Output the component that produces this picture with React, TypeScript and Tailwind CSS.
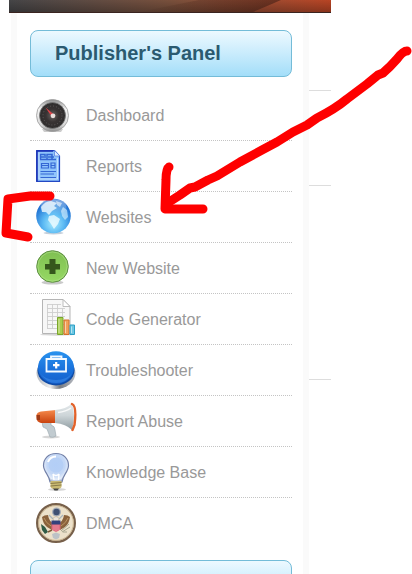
import type { ReactNode } from 'react';

interface MenuItem {
  label: string;
  icon: ReactNode;
}

function DashboardIcon() {
  return (
    <>
      <defs>
        <linearGradient id="dash-rim" x1="0" y1="0" x2="0" y2="1">
          <stop offset="0" stopColor="#8c8c8c" />
          <stop offset="0.3" stopColor="#f4f4f4" />
          <stop offset="0.8" stopColor="#d8d8d8" />
          <stop offset="1" stopColor="#8a8a8a" />
        </linearGradient>
        <radialGradient id="dash-face">
          <stop offset="0" stopColor="#6b6462" />
          <stop offset="0.5" stopColor="#383333" />
          <stop offset="1" stopColor="#2f2d2d" />
        </radialGradient>
      </defs>
      <path d="M6 39 H27 L25 42 H8 Z" fill="#999" opacity="0.5" />
      <circle cx="16.5" cy="25.5" r="16" fill="url(#dash-rim)" stroke="#9a9a9a" strokeWidth="0.8" />
      <circle cx="16.5" cy="25.5" r="13" fill="url(#dash-face)" stroke="#777" strokeWidth="0.8" />
      <circle cx="16.5" cy="25.5" r="9.5" fill="none" stroke="#6a6464" strokeWidth="0.8" strokeDasharray="1 2" />
      <path d="M9.5 17.5 L18 24.5 L16 27 Z" fill="#e0444a" />
      <circle cx="17" cy="25.8" r="2.4" fill="#e9dedb" />
    </>
  );
}

function ReportsIcon() {
  return (
    <>
      <path d="M0.7 9.7 H18.5 L23.5 15 V40.3 H0.7 Z" fill="#8fc4fb" stroke="#2348c4" strokeWidth="1.2" />
      <path d="M18.5 9.5 V15 H24 Z" fill="#dcebff" stroke="#5d86e0" strokeWidth="0.8" />
      <path d="M1 9.5 V40.5 M0.5 10 H17" stroke="#1a2fb4" strokeWidth="1.4" />
      <g fill="none" stroke="#3467d4">
        <path d="M4.5 18.5 V13.5 H9 V17 M11 18 V13.5 H16 V18 M4 18.5 H20 M5 16 H8 M12 16 H18" strokeWidth="1.5" />
        <path d="M5.5 22.5 H12.5 V27 H5.5 Z M15 22 H19 V27 H15 Z M6 24.5 H12 M15 24.5 H19" strokeWidth="1.2" />
        <path d="M4.5 30.5 H20 M4.5 33 H18 M4.5 36.5 H20" strokeWidth="1" />
      </g>
      <path d="M3 11.5 V38 H21.5 V17" fill="none" stroke="#d2e7ff" strokeWidth="0.8" />
    </>
  );
}

function GlobeIcon() {
  return (
    <>
      <defs>
        <radialGradient id="globe-sea" cx="0.5" cy="0.72" r="0.68">
          <stop offset="0" stopColor="#a8ecff" />
          <stop offset="0.45" stopColor="#5bb9f3" />
          <stop offset="1" stopColor="#1261cc" />
        </radialGradient>
        <linearGradient id="globe-shine" x1="0" y1="0" x2="0" y2="1">
          <stop offset="0" stopColor="#fff" stopOpacity="0.5" />
          <stop offset="1" stopColor="#fff" stopOpacity="0" />
        </linearGradient>
      </defs>
      <ellipse cx="17.5" cy="41" rx="10" ry="1.5" fill="#8ba0b5" opacity="0.5" />
      <circle cx="17.5" cy="24" r="17.3" fill="url(#globe-sea)" />
      <path d="M5 15 Q9 9 15 9 L21 11 L18 14 L21 16 L16 19 L13 23 L10 20 L6 20 Z" fill="#eaf7ff" opacity="0.8" />
      <path d="M20 9 L26 11 L24 15 L21 13 Z" fill="#fff" opacity="0.6" />
      <path d="M27 15 L31 18 L32 25 L29 28 L26 24 L25 19 Z" fill="#d4efff" opacity="0.65" />
      <path d="M13 24 L18 23 L24 27 L22 32 L18 37 L15 32 L12 28 Z" fill="#effbff" opacity="0.8" />
      <ellipse cx="17.5" cy="15" rx="13" ry="8" fill="url(#globe-shine)" />
    </>
  );
}

function AddIcon() {
  return (
    <>
      <defs>
        <linearGradient id="add-fill" x1="0" y1="0" x2="0" y2="1">
          <stop offset="0" stopColor="#7fbf51" />
          <stop offset="1" stopColor="#96d964" />
        </linearGradient>
      </defs>
      <ellipse cx="16.5" cy="39.5" rx="11" ry="2" fill="#888" opacity="0.45" />
      <circle cx="16.5" cy="23.5" r="15.8" fill="url(#add-fill)" stroke="#5f8f45" />
      <circle cx="16.5" cy="23.5" r="14.6" fill="none" stroke="#b3e08c" strokeWidth="1" opacity="0.6" />
      <path d="M13.5 16 H19.5 V21 H24 V26.5 H19.5 V31 H13.5 V26.5 H9 V21 H13.5 Z" fill="#35571c" />
    </>
  );
}

function CodeIcon() {
  return (
    <>
      <ellipse cx="21" cy="40.5" rx="17" ry="1.2" fill="#999" opacity="0.4" />
      <path d="M6.5 5.5 H27 L34 12.5 V39.5 H6.5 Z" fill="#f7f7f7" stroke="#b5b5b5" />
      <path d="M27 5.5 V12.5 H34 Z" fill="#fff" stroke="#b5b5b5" strokeWidth="0.9" />
      <g stroke="#cdcdcd" strokeWidth="0.9" fill="none">
        <path d="M11 10.5 H25 M11 14.5 H29 M11 18.5 H29 M11 22.5 H29 M11 26.5 H29 M11 30.5 H29 M11 34.5 H22" />
        <path d="M11.5 10 V35 M16.5 10 V35 M21.5 10 V35 M26.5 14 V30" />
      </g>
      <path d="M21.5 23.5 H27 V40.5 H21.5 Z" fill="#a9ce4f" stroke="#79a62a" />
      <path d="M28 26 H33 V40.5 H28 Z" fill="#f2a25b" stroke="#d4702d" />
      <path d="M34 31 H38.5 V40.5 H34 Z" fill="#6cc8e4" stroke="#2e9ec4" />
      <path d="M23 25 V39 M29.5 27.5 V39 M35.5 32.5 V39" stroke="#fff" opacity="0.5" />
    </>
  );
}

function TroubleshooterIcon() {
  return (
    <>
      <defs>
        <linearGradient id="kit-base" x1="0" y1="0" x2="1" y2="0">
          <stop offset="0" stopColor="#b3b8c0" />
          <stop offset="0.35" stopColor="#eeeeee" />
          <stop offset="0.6" stopColor="#777b82" />
          <stop offset="1" stopColor="#b9bdc5" />
        </linearGradient>
        <linearGradient id="kit-top" x1="0" y1="0" x2="0" y2="1">
          <stop offset="0" stopColor="#2a93ee" />
          <stop offset="0.55" stopColor="#1a72dc" />
          <stop offset="1" stopColor="#1560cc" />
        </linearGradient>
      </defs>
      <ellipse cx="20" cy="28" rx="19.5" ry="16" fill="url(#kit-base)" />
      <ellipse cx="20" cy="25.5" rx="18.5" ry="15" fill="#0f4ca8" />
      <ellipse cx="20" cy="22.5" rx="18" ry="16.3" fill="url(#kit-top)" />
      <path d="M4 28 Q10 38 20 38 Q31 38 36 28 Q31 35 20 35 Q9 35 4 28 Z" fill="#4b9bf2" opacity="0.4" />
      <path d="M10.5 14 H30 V26.5 H10.5 Z" fill="none" stroke="#f4faff" strokeWidth="1.8" />
      <path d="M15 14 V11.5 H25.5 V14" fill="none" stroke="#f4faff" strokeWidth="1.8" />
      <path d="M20.2 17 V23.5 M17 20.2 H23.5" stroke="#fff" strokeWidth="2.2" />
    </>
  );
}

function AbuseIcon() {
  return (
    <>
      <defs>
        <linearGradient id="horn" x1="0" y1="0" x2="0" y2="1">
          <stop offset="0" stopColor="#e4e9eb" />
          <stop offset="0.45" stopColor="#cdd5d8" />
          <stop offset="1" stopColor="#8f9ca1" />
        </linearGradient>
        <linearGradient id="horn-end" x1="0" y1="0" x2="0" y2="1">
          <stop offset="0" stopColor="#f58a4c" />
          <stop offset="1" stopColor="#c9430e" />
        </linearGradient>
      </defs>
      <ellipse cx="15" cy="41" rx="9" ry="1.5" fill="#999" opacity="0.4" />
      <path d="M6 26 H15 L15 29 Q19 30 19 34 L20 40 Q17 42 14 41 L11 33 L7 31 Z" fill="#c1cbd0" stroke="#99a6ac" strokeWidth="0.6" />
      <path d="M0.5 19 Q1 16 5 15.5 L20 14 V27 H5 Q0.5 26 0.5 22 Z" fill="url(#horn-end)" />
      <path d="M0.5 19 H4 V24 H0.8 Z" fill="#9f3b17" />
      <path d="M19 14 Q30 13 36 7.5 Q40 20 36 34 Q30 28 19 27 Z" fill="url(#horn)" />
      <path d="M36 8 Q41 10 38.5 29 L36.5 34" fill="none" stroke="#e2622a" strokeWidth="2.4" strokeLinecap="round" />
      <path d="M22 16.5 Q30 15.5 35 12" fill="none" stroke="#fff" strokeWidth="1.5" opacity="0.8" />
    </>
  );
}

function BulbIcon() {
  return (
    <>
      <defs>
        <radialGradient id="bulb" cx="0.5" cy="0.4" r="0.6">
          <stop offset="0" stopColor="#bcd5f8" />
          <stop offset="0.6" stopColor="#c3d7f6" />
          <stop offset="0.85" stopColor="#e6eefa" />
          <stop offset="1" stopColor="#9aa9c8" />
        </radialGradient>
      </defs>
      <ellipse cx="21" cy="42.5" rx="9" ry="1.5" fill="#999" opacity="0.4" />
      <path d="M20 6.5 C12 6.5 7.5 12 7.5 18.5 C7.5 25 13.5 28 14 35 H26 C26.5 28 32.5 25 32.5 18.5 C32.5 12 28 6.5 20 6.5 Z" fill="url(#bulb)" stroke="#7280a8" strokeWidth="1.2" />
      <circle cx="20" cy="18" r="7.5" fill="#a9c8f5" opacity="0.5" />
      <path d="M12 15 Q14 9.5 20 9.5" fill="none" stroke="#fff" strokeWidth="2" />
      <path d="M18 33 L17 27 M22.5 33 L23 27 M17 27 Q20 30 23 27" fill="none" stroke="#fff" strokeWidth="1.4" />
      <path d="M14.5 34 H25.5 V40 Q25 41 23 42 H17 Q15 41 14.5 40 Z" fill="#c9ba72" />
      <path d="M14.5 36.5 L25.5 35.5 M14.5 39 L25.5 38" stroke="#8a7b48" strokeWidth="1" />
      <path d="M17 41.5 H23 L21.5 43.5 H18.5 Z" fill="#45443f" />
    </>
  );
}

function SealIcon() {
  return (
    <>
      <circle cx="20" cy="25" r="18.9" fill="#ece1ca" stroke="#77604a" strokeWidth="2.2" />
      <circle cx="20" cy="25" r="17.4" fill="none" stroke="#c3ab84" strokeWidth="0.8" />
      {/* Stars above the eagle */}
      <circle cx="20.5" cy="14" r="4.5" fill="#a5adb8" />
      <circle cx="20.5" cy="14" r="3.2" fill="#3f5172" />
      {/* Wings */}
      <path d="M18 25 Q13 24 12 17 Q8 17 6 19 Q7 26 11 29 L16 32 Z" fill="#8a623c" />
      <path d="M22 25 Q27 24 28 17 Q32 17 34 19 Q33 26 29 29 L24 32 Z" fill="#8a623c" />
      <path d="M8 20 Q10 25 15 28 M32 20 Q30 25 25 28" fill="none" stroke="#bb9563" strokeWidth="1" />
      <path d="M13 17 L17 21 M27 17 L23 21" stroke="#a9b6bd" strokeWidth="1.2" />
      <path d="M17 20 Q20 17 23 20 L22 25 H18 Z" fill="#e9e5dc" stroke="#b9a686" strokeWidth="0.5" />
      {/* Shield */}
      <path d="M15.5 24 H24.5 V31 Q23 33 20 34 Q17 33 15.5 31 Z" fill="#e06c80" />
      <path d="M18 27 V32 M20 27 V33 M22 27 V32" stroke="#ef9dab" strokeWidth="0.6" />
      <path d="M15.5 22.5 H24.5 V26.5 H15.5 Z" fill="#34427c" />
      {/* Branch, arrows and tail */}
      <path d="M5 26 L9 29 L12 34 L9 36 L6 32 Z" fill="#2f5b45" />
      <path d="M12 34 L16 32" stroke="#7c5937" strokeWidth="1.5" />
      <path d="M25 33 L33 26 M26 34 L34 29 M27 34 L31 34" stroke="#a7a68f" strokeWidth="1" />
      <path d="M16 36 L20 34.5 L24 36 L23 40 L20 41.5 L17 40 Z" fill="#bcc2c6" />
    </>
  );
}

const menuItems: MenuItem[] = [
  { label: 'Dashboard', icon: <DashboardIcon /> },
  { label: 'Reports', icon: <ReportsIcon /> },
  { label: 'Websites', icon: <GlobeIcon /> },
  { label: 'New Website', icon: <AddIcon /> },
  { label: 'Code Generator', icon: <CodeIcon /> },
  { label: 'Troubleshooter', icon: <TroubleshooterIcon /> },
  { label: 'Report Abuse', icon: <AbuseIcon /> },
  { label: 'Knowledge Base', icon: <BulbIcon /> },
  { label: 'DMCA', icon: <SealIcon /> },
];

function PanelHeading({ children }: { children?: ReactNode }) {
  return (
    <div className="h-[47px] rounded-lg border border-[#74bcd8] bg-linear-to-b from-[#edf9ff] to-[#a3def9] px-6 text-xl leading-[45px] font-bold text-[#2b5a70]">
      {children}
    </div>
  );
}

// Dark-to-orange strip with a soft diagonal fold near its right end
function Banner() {
  return (
    <div className="h-[13px] overflow-hidden border-b border-[#3a2420] bg-linear-to-r from-[#454547] via-[#79503c] to-[#b84424]">
      <svg className="h-full w-full" viewBox="0 0 322 12" preserveAspectRatio="none" aria-hidden="true">
        <defs>
          <linearGradient id="fold" x1="0" y1="0" x2="1" y2="0">
            <stop offset="0" stopColor="#3a1c14" stopOpacity="0" />
            <stop offset="1" stopColor="#3a1c14" stopOpacity="0.55" />
          </linearGradient>
          <linearGradient id="banner-shade" x1="0" y1="0" x2="0" y2="1">
            <stop offset="0" stopColor="#000" stopOpacity="0" />
            <stop offset="1" stopColor="#000" stopOpacity="0.25" />
          </linearGradient>
        </defs>
        <path d="M130 12 L190 0 H272 Q256 7 244 12 Z" fill="url(#fold)" />
        <path d="M0 0 H322 V12 H0 Z" fill="url(#banner-shade)" />
      </svg>
    </div>
  );
}

// Hand-drawn marks pointing at the Websites entry
function Annotation() {
  return (
    <svg
      className="pointer-events-none absolute top-0 left-0"
      width="412"
      height="250"
      viewBox="0 0 412 250"
      fill="none"
      stroke="#fe0000"
      strokeWidth="9"
      strokeLinecap="round"
      strokeLinejoin="round"
      aria-hidden="true"
    >
      <path d="M407 51 Q403 51 397 59 Q390 67 383 73 L378 75 L367 84 L347 99 Q335 109 317 118 L307 125 L293 132 L277 142 L262 150 L240 162 L217 176 L208 180 L195 187 L190 188 L180 195 L166 204" />
      <path d="M169 167 Q166 169 166 180 L165 209 H203" />
      <path d="M50 196 L30 196 L8 199 L6 233 L28 237" />
    </svg>
  );
}

export default function App() {
  return (
    <div className="relative h-screen overflow-hidden bg-white font-['Liberation_Sans',Arial,sans-serif]">
      <div className="mr-[81px] ml-[9px]">
        <Banner />
        <div className="flex">
          <aside className="ml-0.5 flex-1 border-x-[6px] border-[#fafafa] pt-[17px] pr-[11px] pl-[13px]">
            <PanelHeading>Publisher&apos;s Panel</PanelHeading>
            <nav className="mt-[13px] mb-[11px]">
              <ul>
                {menuItems.map((item) => (
                  <li key={item.label} className="border-b border-dotted border-[#c4c4c4] last:border-transparent">
                    <a href="#" className="flex h-[50px] items-center gap-2 pl-1.5 text-base text-[#999]">
                      <svg width="42" height="50" viewBox="0 0 42 50" aria-hidden="true">
                        {item.icon}
                      </svg>
                      <span className="pt-0.5">{item.label}</span>
                    </a>
                  </li>
                ))}
              </ul>
            </nav>
            <PanelHeading />
          </aside>
          <div className="w-[22px]">
            <div className="h-[78px] border-b border-[#ddd]" />
            <div className="h-[95px] border-b border-[#ddd]" />
            <div className="h-[194px] border-b border-[#ddd]" />
          </div>
        </div>
      </div>
      <Annotation />
    </div>
  );
}
